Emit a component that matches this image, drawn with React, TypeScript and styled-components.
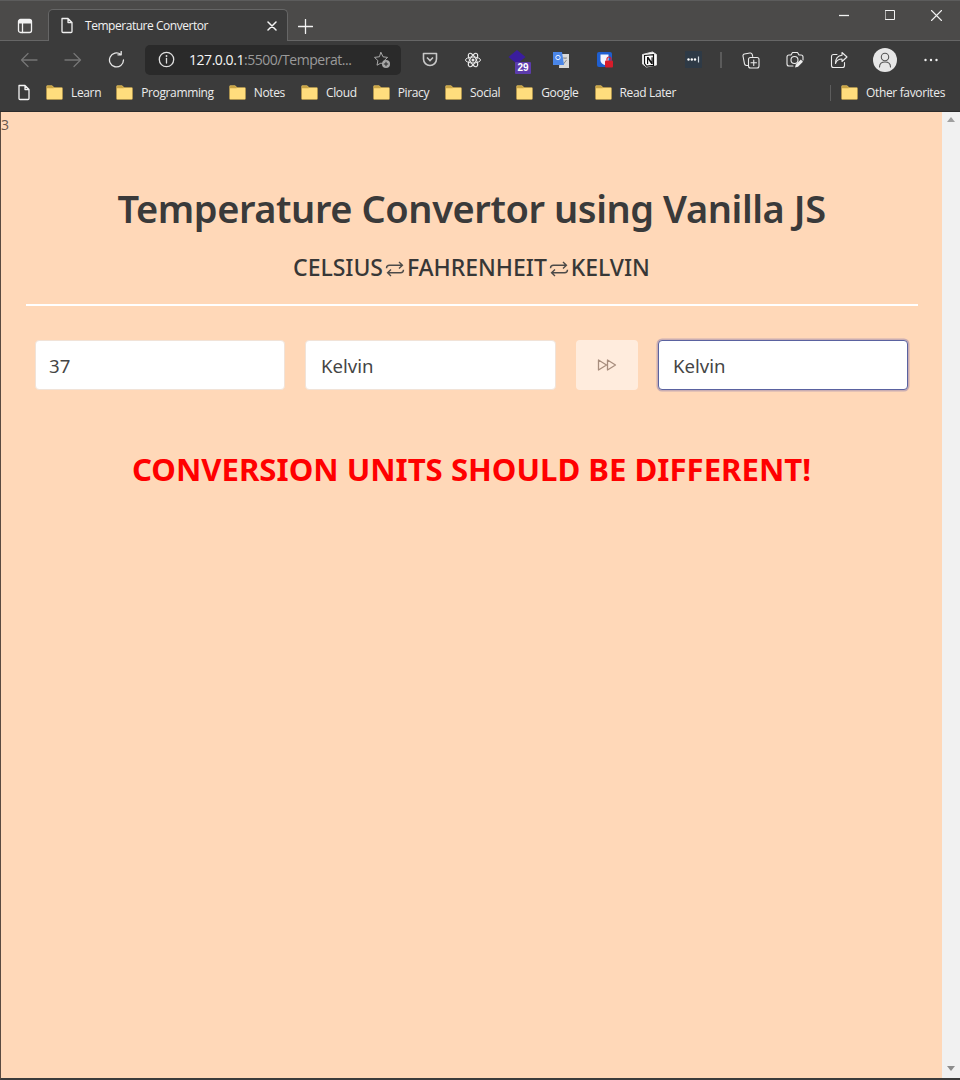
import React from "react";
import styled, { createGlobalStyle } from "styled-components";

const Global = createGlobalStyle`
  html, body { margin: 0; padding: 0; background: #3b3b3b; }
  * { box-sizing: border-box; }
`;

const UI = `"Open Sans", "Noto Sans", "Liberation Sans", sans-serif`;

const Win = styled.div`
  width: 960px;
  height: 1080px;
  display: flex;
  flex-direction: column;
  background: #3b3b3b;
  font-family: ${UI};
  overflow: hidden;
`;

const TitleBar = styled.div`
  height: 41px;
  flex: none;
  display: flex;
  align-items: flex-end;
  padding-left: 15px;
  background: #4b4a49;
  border-top: 1px solid #5c5c5c;
  border-bottom: 1px solid #666;
  position: relative;
`;

const SideTab = styled.div`
  width: 20px;
  height: 28px;
  display: flex;
  align-items: center;
  justify-content: center;
  margin-right: 13px;
`;

const Tab = styled.div`
  width: 240px;
  height: 32px;
  margin-bottom: -1px;
  background: #3b3b3b;
  border: 1px solid #666;
  border-bottom: none;
  border-radius: 5px 5px 0 0;
  display: flex;
  align-items: center;
  padding: 0 10px 0 11px;
  color: #f2f2f2;
  font-size: 12px;
  font-weight: 400;
`;

const TabTitle = styled.span`
  margin-left: 11px;
  flex: 1;
  letter-spacing: -0.46px;
`;

const NewTab = styled.div`
  margin-left: 7px;
  width: 20px;
  height: 28px;
  display: flex;
  align-items: center;
  justify-content: center;
`;

const WinControls = styled.div`
  margin-left: auto;
  height: 28px;
  align-self: flex-start;
  display: flex;
  align-items: center;
  gap: 36px;
  padding-right: 18px;
`;

const Toolbar = styled.div`
  height: 39px;
  flex: none;
  display: flex;
  align-items: center;
  padding: 0 0 2px 20px;
`;

const NavButton = styled.div<{ $w: number }>`
  width: ${(p) => p.$w}px;
  display: flex;
  align-items: center;
`;

const Omni = styled.div`
  width: 256px;
  height: 30px;
  margin-left: 17px;
  background: #2a2a2a;
  border-radius: 5px;
  display: flex;
  align-items: center;
  padding: 0 10px 0 13px;
  font-size: 14px;
  letter-spacing: -0.46px;
  color: #f5f5f5;
`;

const Url = styled.span`
  margin-left: 14px;
  flex: 1;
  white-space: nowrap;
`;

const UrlDim = styled.span`
  color: #9a9a9a;
`;

const Ext = styled.div<{ $l: number }>`
  margin-left: ${(p) => p.$l}px;
  width: 20px;
  height: 20px;
  flex: none;
  position: relative;
  display: flex;
  align-items: center;
  justify-content: center;
`;

const Badge = styled.span`
  position: absolute;
  left: 8px;
  top: 12px;
  width: 16px;
  height: 12px;
  background: #5c3cab;
  border-radius: 1px;
  color: #fff;
  font-size: 10px;
  line-height: 12px;
  font-weight: 700;
  text-align: center;
  font-family: "Liberation Sans", sans-serif;
`;

const Sep = styled.div`
  margin-left: 17px;
  width: 2px;
  height: 16px;
  background: #5b5b5b;
  flex: none;
`;

const Avatar = styled.div`
  margin-left: 24px;
  width: 24px;
  height: 24px;
  border-radius: 50%;
  background: #e6e6e6;
  flex: none;
  display: flex;
  align-items: center;
  justify-content: center;
`;

const Bookmarks = styled.div`
  height: 32px;
  flex: none;
  display: flex;
  align-items: center;
  padding: 0 15px 6px 17px;
  color: #ececec;
  font-size: 12px;
  letter-spacing: -0.36px;
  border-bottom: 1px solid #2c2c2c;
`;

const Mark = styled.div<{ $l: number }>`
  margin-left: ${(p) => p.$l}px;
  display: flex;
  align-items: center;
  gap: 8px;
  white-space: nowrap;
`;

const MarkSep = styled.div`
  margin-left: auto;
  width: 1px;
  height: 16px;
  background: #5d5d5d;
`;

const Viewport = styled.div`
  flex: 1;
  display: flex;
  min-height: 0;
  border-left: 1px solid #5a4a40;
  border-bottom: 2px solid #3b3b3b;
`;

const Page = styled.main`
  flex: 1;
  background: #ffd8b8;
  color: #363636;
  font-family: "Noto Sans", "Open Sans", sans-serif;
  padding: 0 24px;
`;

const Stray = styled.div`
  margin-left: -24px;
  height: 72px;
  font-size: 14px;
  line-height: 25px;
  color: #6a574c;
  font-family: ${UI};
`;

const Title = styled.h1`
  margin: 0;
  text-align: center;
  font-size: 38px;
  line-height: 48px;
  font-weight: 600;
  letter-spacing: -0.42px;
  color: #3a3a3a;
`;

const Sub = styled.h2`
  margin: 19px 0 0;
  height: 32px;
  display: flex;
  justify-content: center;
  align-items: center;
  font-size: 23px;
  line-height: 32px;
  font-weight: 500;
  letter-spacing: -0.04px;
  color: #373737;
`;

const Swap = styled.svg`
  width: 24px;
  height: 20px;
  flex: none;
  margin-top: 4px;
`;

const Rule = styled.hr`
  margin: 21px 0 0 1px;
  width: 892px;
  height: 2px;
  border: none;
  background: #fff;
`;

const Row = styled.div`
  margin: 34px 0 0 10px;
  display: grid;
  grid-template-columns: 250px 251px 62px 250px;
  column-gap: 20px;
  height: 50px;
`;

const Field = styled.div<{ $focus?: boolean; $pad: number }>`
  height: 50px;
  background: #fff;
  border-radius: 4px;
  border: 1px solid ${(p) => (p.$focus ? "#5a62a0" : "#f1e3d8")};
  box-shadow: ${(p) => (p.$focus ? "0 0 0 1.5px rgba(120,110,170,0.4)" : "none")};
  display: flex;
  align-items: center;
  padding: 1px 0 0 ${(p) => p.$pad}px;
  font-size: 18.6px;
  color: #454545;
`;

const GoButton = styled.div`
  height: 50px;
  background: #ffecdd;
  border-radius: 4px;
  display: flex;
  align-items: center;
  justify-content: center;
`;

const Err = styled.p`
  margin: 55px 0 0;
  text-align: center;
  font-size: 31.15px;
  line-height: 48px;
  font-weight: 700;
  color: #ff0000;
`;

const Scroll = styled.aside`
  width: 18px;
  flex: none;
  background: #f1f1f1;
  display: flex;
  flex-direction: column;
  justify-content: space-between;
  align-items: center;
  padding: 5px 0 7px;
`;

const Stroke = { fill: "none", stroke: "currentColor", strokeWidth: 1.3, strokeLinecap: "round", strokeLinejoin: "round" } as const;

const Doc = ({ c = "#f0f0f0" }: { c?: string }) => (
  <svg width="14" height="17" viewBox="0 0 14 17" style={{ color: c, flex: "none" }}>
    <path d="M2 1.5h6l4 4v9a1 1 0 0 1-1 1H3a1 1 0 0 1-1-1z M8 1.5v4h4" {...Stroke} />
  </svg>
);

const Folder = () => (
  <svg width="17" height="15" viewBox="0 0 17 15" style={{ flex: "none" }}>
    <path d="M0.500 1.500C.5 1 1 .5 1.500 .5h4.500l2 2h7.500c.6 0 1 .4 1 1v10c0 .6-.4 1-1 1H1.500c-.6 0-1-.4-1-1z" fill="#ffdd7d" stroke="#b4964a" strokeWidth="0.700" />
    <path d="M1 3.200h6.500L9 2.500H7.800L6 .9H1.500L1 1.500z" fill="#c9a445" />
  </svg>
);

const SwapIcon = () => (
  <Swap viewBox="0 0 24 20">
    <path d="M3.500 9.200c0-2 1-3 3-3h12.500M16 3l3.400 3.200L16 9.400M20.500 10.800c0 2-1 3-3 3H5M8 17l-3.400-3.200L8 10.600" fill="none" stroke="#4c4a48" strokeWidth="1.400" />
  </Swap>
);

const marks: [string, number][] = [
  ["Learn", 15],
  ["Programming", 15],
  ["Notes", 15],
  ["Cloud", 16],
  ["Piracy", 16],
  ["Social", 16],
  ["Google", 16],
  ["Read Later", 16],
];

export default function App() {
  return (
    <Win>
      <Global />
      <TitleBar>
        <SideTab>
          <svg width="16" height="16" viewBox="0 0 16 16" style={{ color: "#f2f2f2" }}>
            <rect x="1.500" y="1.500" width="13" height="13" rx="2" {...Stroke} />
            <path d="M1.500 5.500h13V3.500a2 2 0 0 0-2-2h-9a2 2 0 0 0-2 2z" fill="#f2f2f2" />
            <path d="M5.500 5.500v9" {...Stroke} />
          </svg>
        </SideTab>
        <Tab>
          <Doc />
          <TabTitle>Temperature Convertor</TabTitle>
          <svg width="10" height="10" viewBox="0 0 10 10" style={{ color: "#f5f5f5" }}>
            <path d="M1 1l8 8M9 1l-8 8" {...Stroke} strokeWidth="1.500" />
          </svg>
        </Tab>
        <NewTab>
          <svg width="15" height="15" viewBox="0 0 15 15" style={{ color: "#f2f2f2" }}>
            <path d="M7.500 0.500v14M0.500 7.500h14" {...Stroke} />
          </svg>
        </NewTab>
        <WinControls>
          <svg width="10" height="10" viewBox="0 0 10 10" style={{ color: "#f2f2f2" }}><path d="M0 5.500h10" {...Stroke} strokeLinecap="butt" /></svg>
          <svg width="10" height="10" viewBox="0 0 10 10" style={{ color: "#f2f2f2" }}><rect x="0.500" y="0.500" width="9" height="9" {...Stroke} strokeWidth="1" /></svg>
          <svg width="11" height="11" viewBox="0 0 11 11" style={{ color: "#f2f2f2" }}><path d="M0.500 0.500l10 10M10.500 0.500l-10 10" {...Stroke} strokeWidth="1.100" /></svg>
        </WinControls>
      </TitleBar>

      <Toolbar>
        <NavButton $w={44}>
          <svg width="18" height="16" viewBox="0 0 18 16" style={{ color: "#757575" }}><path d="M17 8H1.500M8 1.500L1.500 8 8 14.500" {...Stroke} /></svg>
        </NavButton>
        <NavButton $w={44}>
          <svg width="18" height="16" viewBox="0 0 18 16" style={{ color: "#757575" }}><path d="M1 8h15.500M10 1.500L16.500 8 10 14.500" {...Stroke} /></svg>
        </NavButton>
        <NavButton $w={20}>
          <svg width="18" height="18" viewBox="0 0 18 18" style={{ color: "#e6e6e6" }}><path d="M15.500 9A7 7 0 1 1 12.800 3.400M13.200 0.500v3.300H9.900" {...Stroke} /></svg>
        </NavButton>
        <Omni>
          <svg width="17" height="17" viewBox="0 0 17 17" style={{ color: "#e0e0e0", flex: "none" }}>
            <circle cx="8.500" cy="8.500" r="7.200" {...Stroke} />
            <path d="M8.500 7.500v4.500" {...Stroke} />
            <circle cx="8.500" cy="5" r="0.900" fill="currentColor" />
          </svg>
          <Url>127.0.0.1<UrlDim>:5500/Temperat...</UrlDim></Url>
          <svg width="18" height="18" viewBox="0 0 18 18" style={{ color: "#a8a8a8", flex: "none" }}>
            <path d="M8 1.500l2 4.300 4.600.6-3.400 3.200.9 4.600L8 12 4 14.200l.9-4.600L1.500 6.400l4.600-.6z" {...Stroke} strokeWidth="1" />
            <circle cx="13" cy="13" r="4" fill="#a8a8a8" />
            <path d="M13 10.800v4.400M10.800 13h4.400" stroke="#2a2a2a" strokeWidth="1" />
          </svg>
        </Omni>
        <Ext $l={19}>
          <svg width="16" height="15" viewBox="0 0 16 15" style={{ color: "#c8c8c8" }}>
            <path d="M1.500 1.500h13v5.500a6.500 6.500 0 0 1-13 0z" fill="none" stroke="currentColor" strokeWidth="1.600" strokeLinejoin="round" />
            <path d="M5 5.500l3 3 3-3" fill="none" stroke="currentColor" strokeWidth="1.600" />
          </svg>
        </Ext>
        <Ext $l={23}>
          <svg width="18" height="18" viewBox="0 0 18 18" style={{ color: "#e8e8e8" }}>
            <g fill="none" stroke="currentColor" strokeWidth="1">
              <ellipse cx="9" cy="9" rx="7.500" ry="3" />
              <ellipse cx="9" cy="9" rx="7.500" ry="3" transform="rotate(60 9 9)" />
              <ellipse cx="9" cy="9" rx="7.500" ry="3" transform="rotate(120 9 9)" />
            </g>
            <circle cx="9" cy="9" r="1.500" fill="currentColor" />
          </svg>
        </Ext>
        <Ext $l={24}>
          <svg width="18" height="16" viewBox="0 0 18 16" style={{ marginTop: -4 }}>
            <path d="M9 0l8.500 7L9 14 .5 7z" fill="#3a1d9e" />
          </svg>
          <Badge>29</Badge>
        </Ext>
        <Ext $l={24}>
          <svg width="18" height="18" viewBox="0 0 18 18">
            <path d="M8 3h9v14H7z" fill="#d8d8d8" />
            <path d="M11 7h4M13 7v1M11.500 13l3-4" stroke="#8a8a8a" strokeWidth="1" fill="none" />
            <path d="M1 1h9l2 13H1z" fill="#4a86e8" />
            <circle cx="6" cy="6.500" r="2.200" fill="none" stroke="#e8f0ff" strokeWidth="1" />
          </svg>
        </Ext>
        <Ext $l={24}>
          <svg width="18" height="18" viewBox="0 0 18 18">
            <rect x="1" y="1" width="15" height="15" rx="2" fill="#1f5fd0" />
            <path d="M4.500 3.500h8v6c0 2-2 3.500-4 4.500-2-1-4-2.500-4-4.500z" fill="#f2f5ff" />
            <rect x="9" y="9.500" width="8" height="7" rx="1" fill="#d81c2a" />
            <path d="M11 9.500V8a2 2 0 0 1 4 0v1.500" fill="none" stroke="#d81c2a" strokeWidth="1.200" />
          </svg>
        </Ext>
        <Ext $l={24}>
          <svg width="17" height="17" viewBox="0 0 17 17">
            <path d="M1.500 3.500L11.500 1l4 2.500V14l-10 2-4-3z" fill="#fff" stroke="#ddd" strokeWidth="1" />
            <path d="M3.500 4.500l9-.8V14.400l-7 .6-2-2.500z" fill="#fff" stroke="#111" strokeWidth="1.200" />
            <path d="M6 6h1.500l3 4.500V6.200h1.200V13h-1.500L7.200 8.500V13H6z" fill="#111" />
          </svg>
        </Ext>
        <Ext $l={24}>
          <svg width="17" height="17" viewBox="0 0 17 17">
            <rect width="17" height="17" rx="1" fill="#2e3a46" />
            <circle cx="3.500" cy="8.500" r="1.200" fill="#fff" />
            <circle cx="6.800" cy="8.500" r="1.200" fill="#fff" />
            <circle cx="10" cy="8.500" r="1.200" fill="#fff" />
            <path d="M13.500 5.500v6" stroke="#cfd8e0" strokeWidth="1.200" />
          </svg>
        </Ext>
        <Sep />
        <Ext $l={19}>
          <svg width="18" height="18" viewBox="0 0 18 18" style={{ color: "#ececec" }}>
            <path d="M6 14.500H4.500a2 2 0 0 1-2-1.600L1 5a1.700 1.700 0 0 1 1.400-2l5.500-1a2 2 0 0 1 2.300 1.400l.5 2" {...Stroke} strokeWidth="1.100" />
            <rect x="6.500" y="6.500" width="10.500" height="10.500" rx="2" {...Stroke} strokeWidth="1.100" />
            <path d="M11.750 9v5.500M9 11.750h5.500" {...Stroke} strokeWidth="1.100" />
          </svg>
        </Ext>
        <Ext $l={24}>
          <svg width="18" height="18" viewBox="0 0 18 18" style={{ color: "#ececec" }}>
            <path d="M7 15H3a2 2 0 0 1-2-2V6a2 2 0 0 1 2-2h2l1.500-2.500h5L13 4h2a2 2 0 0 1 2 2v3" {...Stroke} strokeWidth="1.100" />
            <circle cx="8.500" cy="9" r="3.500" {...Stroke} strokeWidth="1.100" />
            <path d="M9 16.500l.8-3 5-5 2.200 2.200-5 5z" fill="#ececec" />
          </svg>
        </Ext>
        <Ext $l={24}>
          <svg width="18" height="18" viewBox="0 0 18 18" style={{ color: "#ececec" }}>
            <path d="M7 3.500H3.500a2 2 0 0 0-2 2v9a2 2 0 0 0 2 2h9a2 2 0 0 0 2-2v-3" {...Stroke} strokeWidth="1.100" />
            <path d="M12 1.500l5 4.500-5 4.500V8C8 8 6.500 9.500 5.500 12.500 5.500 8 7.500 4.500 12 4.200z" {...Stroke} strokeWidth="1.100" />
          </svg>
        </Ext>
        <Avatar>
          <svg width="14" height="16" viewBox="0 0 14 16" style={{ color: "#555" }}>
            <circle cx="7" cy="5" r="3.700" {...Stroke} strokeWidth="1.100" />
            <path d="M1.500 15c0-3.500 2.200-5 5.500-5s5.500 1.500 5.500 5" {...Stroke} strokeWidth="1.100" />
          </svg>
        </Avatar>
        <Ext $l={24}>
          <svg width="14" height="4" viewBox="0 0 14 4" style={{ color: "#f0f0f0" }}>
            <circle cx="1.500" cy="2" r="1.200" fill="currentColor" />
            <circle cx="7" cy="2" r="1.200" fill="currentColor" />
            <circle cx="12.500" cy="2" r="1.200" fill="currentColor" />
          </svg>
        </Ext>
      </Toolbar>

      <Bookmarks>
        <Doc c="#f5f5f5" />
        {marks.map(([label, l]) => (
          <Mark key={label} $l={l}>
            <Folder />
            {label}
          </Mark>
        ))}
        <MarkSep />
        <Mark $l={10}>
          <Folder />
          Other favorites
        </Mark>
      </Bookmarks>

      <Viewport>
        <Page>
          <Stray>3</Stray>
          <Title>Temperature Convertor using Vanilla JS</Title>
          <Sub>
            CELSIUS
            <SwapIcon />
            FAHRENHEIT
            <SwapIcon />
            KELVIN
          </Sub>
          <Rule />
          <Row>
            <Field $pad={13}>37</Field>
            <Field $pad={15}>Kelvin</Field>
            <GoButton>
              <svg width="20" height="14" viewBox="0 0 20 14" style={{ color: "#a88e7e" }}>
                <path d="M1.500 2l8 5-8 5zM10.500 2l8 5-8 5z" {...Stroke} />
              </svg>
            </GoButton>
            <Field $focus $pad={14}>Kelvin</Field>
          </Row>
          <Err>CONVERSION UNITS SHOULD BE DIFFERENT!</Err>
        </Page>
        <Scroll>
          <svg width="8" height="5" viewBox="0 0 8 5"><path d="M4 0l4 5H0z" fill="#a0a0a0" /></svg>
          <svg width="8" height="5" viewBox="0 0 8 5"><path d="M0 0h8L4 5z" fill="#8c8c8c" /></svg>
        </Scroll>
      </Viewport>
    </Win>
  );
}
